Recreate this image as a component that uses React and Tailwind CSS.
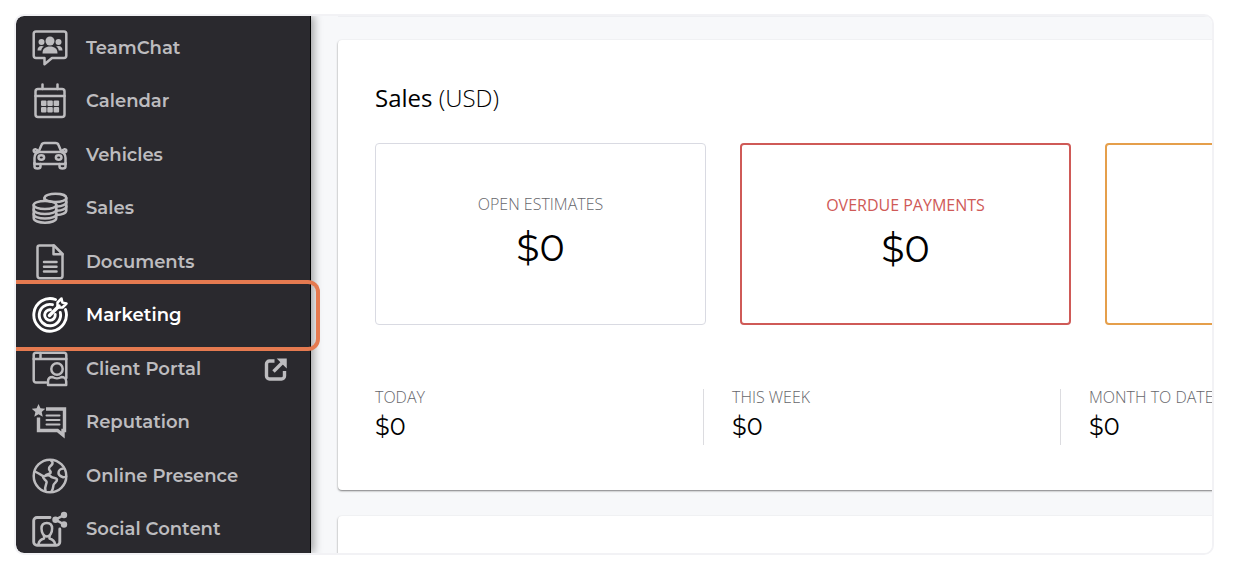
import React from "react";

const Icon = ({ children }) => (
  <svg
    viewBox="0 0 36 36"
    className="h-9 w-9 shrink-0"
    fill="none"
    stroke="currentColor"
    strokeWidth="2.5"
    strokeLinecap="round"
    strokeLinejoin="round"
    aria-hidden="true"
  >
    {children}
  </svg>
);

const TeamChatIcon = () => (
  <Icon>
    <path d="M4 1.500h28a2.300 2.300 0 0 1 2.300 2.300v22A2.300 2.300 0 0 1 32 28H20l-7.500 6.300V28H4a2.300 2.300 0 0 1-2.300-2.200v-22A2.300 2.300 0 0 1 4 1.500z" />
    <g fill="currentColor" stroke="none">
      <circle cx="18" cy="11" r="4.500" />
      <circle cx="9.500" cy="12" r="3" />
      <circle cx="26.500" cy="12" r="3" />
      <path d="M10.500 23.500c0-5 3-7 7.500-7s7.500 2 7.500 7z" />
      <path d="M5.500 20.500c0-3 1.500-4.500 4-4.500 1 0 1.700.2 2.400.6-1.700 1-2.400 2.400-2.600 3.900z" />
      <path d="M30.500 20.500c0-3-1.500-4.500-4-4.500-1 0-1.700.2-2.400.6 1.700 1 2.400 2.400 2.600 3.900z" />
    </g>
  </Icon>
);

const CalendarIcon = () => (
  <Icon>
    <rect x="3.500" y="6" width="29" height="28" rx="2.500" />
    <path d="M3.500 13h29M10.500 1.500V6M25.500 1.500V6" />
    <g fill="currentColor" stroke="none">
      <rect x="9" y="17.500" width="5.500" height="5.500" rx="1" />
      <rect x="15.300" y="17.500" width="5.500" height="5.500" rx="1" />
      <rect x="21.600" y="17.500" width="5.500" height="5.500" rx="1" />
      <rect x="9" y="24" width="5.500" height="5.500" rx="1" />
      <rect x="15.300" y="24" width="5.500" height="5.500" rx="1" />
      <rect x="21.600" y="24" width="5.500" height="5.500" rx="1" />
    </g>
  </Icon>
);

const CarIcon = () => (
  <Icon>
    <path d="M6.500 15l3-7C10 6.500 11 6 12.500 6h11c1.500 0 2.500.5 3 2l3 7" />
    <path d="M6.500 15h23c2.700 1 4 3 4 6v6h-31v-6c0-3 1.300-5 4-6z" />
    <path d="M6 14.500c-1-2.700-4.300-2.700-4.300-1 0 1.500 1.300 2 3 2M30 14.500c1-2.700 4.300-2.700 4.300-1 0 1.500-1.300 2-3 2" />
    <path d="M2.500 26v3.500c0 2.700 6 2.700 6 0V27M33.500 26v3.500c0 2.700-6 2.700-6 0V27" />
    <ellipse cx="9.300" cy="20.500" rx="2.800" ry="2.200" />
    <ellipse cx="26.700" cy="20.500" rx="2.800" ry="2.200" />
  </Icon>
);

const CoinsIcon = () => (
  <Icon>
    <ellipse cx="13" cy="15" rx="11.300" ry="4" />
    <path d="M1.700 15v13c0 6.200 22.600 6.200 22.600 0V15" />
    <path d="M1.700 19.500c0 6 22.600 6 22.600 0M1.700 24c0 6 22.600 6 22.600 0" />
    <path d="M12.500 10V8c0-5.600 21.800-5.600 21.800 0v12.500c0 2.500-4.300 4.500-9.500 4.500" />
    <path d="M12.500 8c0 2.300 5 4 10.900 4s10.900-1.700 10.900-4M25 16.500c5-.2 9.300-2 9.300-4.500M25 20.700c5-.2 9.300-2 9.300-4.500" />
  </Icon>
);

const DocumentIcon = () => (
  <Icon>
    <path d="M7.500 1.500h14.500L30.500 10v21.800a2.500 2.500 0 0 1-2.500 2.500H8a2.500 2.500 0 0 1-2.500-2.500V3.500a2 2 0 0 1 2-2z" />
    <path d="M21.500 1.500v8.700h9M12 18h12.500M12 22.700h12.500M12 27.400h12.500" />
  </Icon>
);

const TargetIcon = () => (
  <Icon>
    <g strokeWidth="2.900">
      <path d="M23.500 2.500A16.300 16.300 0 1 0 33.500 12.500" />
      <path d="M20.500 7.700A10.700 10.700 0 1 0 28.300 15.500" />
      <path d="M18.500 12.800A5.300 5.300 0 1 0 23.200 17.500" />
    </g>
    <path d="M17.500 18.500L27 9" strokeWidth="3.400" />
    <path d="M25.500 10.500V5.500L29.500 1.500l.9 4.100 4.100.9-4 4z" />
  </Icon>
);

const PortalIcon = () => (
  <Icon>
    <path d="M14 31.500H4a2.300 2.300 0 0 1-2.300-2.300V4A2.300 2.300 0 0 1 4 1.700h28A2.300 2.300 0 0 1 34.300 4v23" />
    <path d="M1.700 8h32.600M8.500 2v6" />
    <circle cx="25" cy="18" r="5.700" />
    <path d="M16 34v-3.500c0-3 2-4.500 4.500-4.500 2.500 1.700 6.500 1.700 9 0 2.500 0 4.700 1.500 4.700 4.500V34z" />
  </Icon>
);

const ReputationIcon = () => (
  <Icon>
    <path
      d="M6.500 0l2 4.300 4.800.5-3.600 3.200 1.100 4.700-4.300-2.500-4.200 2.500 1.100-4.700L-.2 4.800l4.800-.5z"
      fill="currentColor"
      stroke="none"
    />
    <path
      d="M14 5h18.500v21.500H31v4.500l-5.500-4.500H6.500V13.500"
      strokeWidth="3.400"
      strokeLinecap="butt"
      strokeLinejoin="miter"
    />
    <path d="M14.500 11.500h13M14.500 16h13M14.500 20.500h13" strokeWidth="2" />
  </Icon>
);

const GlobeIcon = () => (
  <Icon>
    <circle cx="18" cy="18" r="16.300" />
    <path d="M19 2.500c2 1.500 2 3 .5 4.500s-3 2-2.500 4 2.500 2.500 1.500 4-4 1-5 2.500-2 1-3.500 0-4-2.500-7-4" />
    <path d="M11 18c-.5 3 2.500 3.500 3.500 5.500s-2.500 4-1 9.500" />
    <path d="M14.500 17.500c2.500-1 4 .5 5 1.500s5 .5 5.500 2.500-3 3.500-3.500 5.500 0 3.500-2 6.500" />
    <path d="M31.500 10.500c-3 0-5 2-5 4.500s2.500 3.500 4 4 2.500 0 3.500-.5" />
  </Icon>
);

const SocialIcon = () => (
  <Icon>
    <path
      d="M18 6.500H5A3.300 3.300 0 0 0 1.700 9.800V31A3.300 3.300 0 0 0 5 34.300h19.500a3.300 3.300 0 0 0 3.300-3.300V18"
      strokeWidth="2.900"
    />
    <path d="M9.500 17.500c0-3.500 2-5.500 5.300-5.500s5.300 2 5.300 5.500-1.800 8-5.300 8-5.300-4.500-5.300-8z" />
    <path d="M12 25v2.500c-3 .8-5 2-5.500 5.500M17.500 25v2.500c3 .8 5 2 5.500 5.500" />
    <path d="M32 4l-8.500 4.700L32 13.500" />
    <g fill="currentColor" stroke="none">
      <circle cx="32" cy="4" r="3.200" />
      <circle cx="23.500" cy="8.700" r="3.200" />
      <circle cx="32" cy="13.500" r="3.200" />
    </g>
  </Icon>
);

const ExternalIcon = () => (
  <svg
    viewBox="0 0 24 24"
    className="mr-[22px] ml-auto h-6 w-6"
    fill="none"
    stroke="currentColor"
    strokeWidth="3.400"
    aria-hidden="true"
  >
    <path d="M10.500 4H5.500a3 3 0 0 0-3 3v12a3 3 0 0 0 3 3h12a3 3 0 0 0 3-3v-5" />
    <path d="M9.500 14.500L20 4" />
    <path d="M14.500 2.200h7.500v7.500z" fill="currentColor" strokeWidth="1.500" />
  </svg>
);

const menu = [
  { label: "TeamChat", icon: TeamChatIcon },
  { label: "Calendar", icon: CalendarIcon },
  { label: "Vehicles", icon: CarIcon },
  { label: "Sales", icon: CoinsIcon },
  { label: "Documents", icon: DocumentIcon },
  { label: "Marketing", icon: TargetIcon, active: true },
  { label: "Client Portal", icon: PortalIcon, external: true },
  { label: "Reputation", icon: ReputationIcon },
  { label: "Online Presence", icon: GlobeIcon },
  { label: "Social Content", icon: SocialIcon },
];

const Sidebar = () => {
  return (
    <nav className="relative z-10 flex w-[295px] shrink-0 flex-col rounded-l-lg border-r border-black bg-[#2a292e] pt-[5px] shadow-[3px_0_8px_rgba(0,0,0,0.35)]">
      <ul className="-mb-[3px] flex flex-1 flex-col font-[Montserrat,Inter,sans-serif] text-lg font-semibold">
        {menu.map(({ label, icon: ItemIcon, active, external }) => (
          <li key={label} className="relative flex-1">
            <a
              href="#"
              className={
                active
                  ? "flex h-full items-center gap-[18px] pl-4 text-white"
                  : "flex h-full items-center gap-[18px] pl-4 text-[#bdbcbf]"
              }
            >
              <ItemIcon />
              <span className="whitespace-nowrap">{label}</span>
              {external && <ExternalIcon />}
            </a>
            {active && (
              <div className="pointer-events-none absolute -inset-y-[9px] -right-2.5 left-0 z-10 rounded-r-xl border-4 border-l-0 border-[#e57a50]" />
            )}
          </li>
        ))}
      </ul>
    </nav>
  );
};

const totals = [
  { label: "Today", value: "$0" },
  { label: "This week", value: "$0" },
  { label: "Month to date", value: "$0" },
];

const SalesCard = () => {
  return (
    <section className="w-[1135px] rounded-sm bg-white px-[37px] pt-[42px] pb-[45px] shadow-[0_1px_2px_rgba(0,0,0,0.5)]">
      <h2 className="text-2xl leading-8 text-black">
        Sales <span className="font-light">(USD)</span>
      </h2>
      <div className="mt-[29px] grid grid-cols-3 gap-[34px]">
        <div className="flex h-[182px] flex-col items-center rounded border border-[#d9dae2] pt-[50px]">
          <p className="text-base leading-5 font-light text-[#66666b]">OPEN ESTIMATES</p>
          <p className="mt-1.5 font-[Montserrat,Inter,sans-serif] text-[38px] leading-[56px] text-black">$0</p>
        </div>
        <div className="flex h-[182px] flex-col items-center rounded border-2 border-[#cf5a57] pt-[50px]">
          <p className="text-base leading-5 text-[#cf5a57]">OVERDUE PAYMENTS</p>
          <p className="mt-1.5 font-[Montserrat,Inter,sans-serif] text-[38px] leading-[56px] text-black">$0</p>
        </div>
        <div className="h-[182px] rounded border-2 border-[#e59f4b]" />
      </div>
      <dl className="mt-16 flex gap-7">
        {totals.map(({ label, value }) => (
          <div key={label} className="w-[329px] shrink-0 border-r border-[#dcdce0]">
            <dt className="text-base leading-4 font-light text-[#66666b] uppercase">{label}</dt>
            <dd className="mt-1 pt-0.5 pb-0.5 font-[Montserrat,Inter,sans-serif] text-2xl leading-8 text-black">{value}</dd>
          </div>
        ))}
      </dl>
    </section>
  );
};

const App = () => {
  return (
    <div className="flex h-screen bg-white pt-3.5 pr-8 pb-[19px] pl-3.5">
      <div className="flex flex-1 overflow-hidden rounded-[10px] border-2 border-[#f2f2f5]">
        <Sidebar />
        <main className="min-w-0 flex-1 overflow-hidden bg-[#f7f8fa] pl-[27px] font-['Open_Sans',sans-serif]">
          <div className="h-px w-[1135px] bg-[#eeeff2]" />
          <div className="mt-[23px]">
            <SalesCard />
          </div>
          <div className="mt-[26px] h-24 w-[1135px] rounded-sm bg-white shadow-[0_1px_2px_rgba(0,0,0,0.5)]" />
        </main>
      </div>
    </div>
  );
};

export default App;
